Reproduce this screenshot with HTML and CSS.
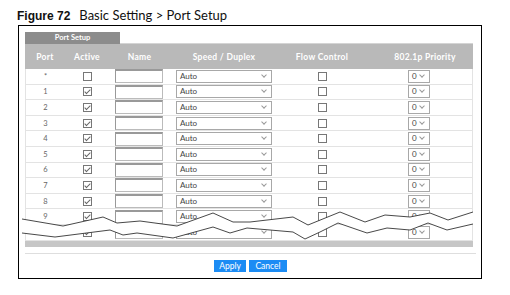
FILE: index.html
```html
<!DOCTYPE html>
<html>

<head>
    <title>Port Setup</title>
    <link rel="stylesheet" href="styles.css">
</head>

<body>
    <div class="fig-title"><b>Figure 72</b>Basic Setting &gt; Port Setup</div>

    <div class="frame">
        <div class="tabbar">
            <div class="tab">Port Setup</div>
        </div>

        <div class="row head">
            <div>Port</div>
            <div>Active</div>
            <div>Name</div>
            <div>Speed / Duplex</div>
            <div>Flow Control</div>
            <div class="prio-head">802.1p Priority</div>
        </div>

        <div class="rows">
            <div class="row"><div class="port">*</div><div class="c"><span class="cb"></span></div><div class="name"><span class="txt"></span></div><div class="speed"><span class="sel">Auto</span></div><div class="c"><span class="cb"></span></div><div class="prio"><span class="sel small">0</span></div></div>
            <div class="row"><div class="port">1</div><div class="c"><span class="cb on"></span></div><div class="name"><span class="txt"></span></div><div class="speed"><span class="sel">Auto</span></div><div class="c"><span class="cb"></span></div><div class="prio"><span class="sel small">0</span></div></div>
            <div class="row"><div class="port">2</div><div class="c"><span class="cb on"></span></div><div class="name"><span class="txt"></span></div><div class="speed"><span class="sel">Auto</span></div><div class="c"><span class="cb"></span></div><div class="prio"><span class="sel small">0</span></div></div>
            <div class="row"><div class="port">3</div><div class="c"><span class="cb on"></span></div><div class="name"><span class="txt"></span></div><div class="speed"><span class="sel">Auto</span></div><div class="c"><span class="cb"></span></div><div class="prio"><span class="sel small">0</span></div></div>
            <div class="row"><div class="port">4</div><div class="c"><span class="cb on"></span></div><div class="name"><span class="txt"></span></div><div class="speed"><span class="sel">Auto</span></div><div class="c"><span class="cb"></span></div><div class="prio"><span class="sel small">0</span></div></div>
            <div class="row"><div class="port">5</div><div class="c"><span class="cb on"></span></div><div class="name"><span class="txt"></span></div><div class="speed"><span class="sel">Auto</span></div><div class="c"><span class="cb"></span></div><div class="prio"><span class="sel small">0</span></div></div>
            <div class="row"><div class="port">6</div><div class="c"><span class="cb on"></span></div><div class="name"><span class="txt"></span></div><div class="speed"><span class="sel">Auto</span></div><div class="c"><span class="cb"></span></div><div class="prio"><span class="sel small">0</span></div></div>
            <div class="row"><div class="port">7</div><div class="c"><span class="cb on"></span></div><div class="name"><span class="txt"></span></div><div class="speed"><span class="sel">Auto</span></div><div class="c"><span class="cb"></span></div><div class="prio"><span class="sel small">0</span></div></div>
            <div class="row"><div class="port">8</div><div class="c"><span class="cb on"></span></div><div class="name"><span class="txt"></span></div><div class="speed"><span class="sel">Auto</span></div><div class="c"><span class="cb"></span></div><div class="prio"><span class="sel small">0</span></div></div>
            <div class="row"><div class="port">9</div><div class="c"><span class="cb on"></span></div><div class="name"><span class="txt"></span></div><div class="speed"><span class="sel">Auto</span></div><div class="c"><span class="cb"></span></div><div class="prio"><span class="sel small">0</span></div></div>
            <div class="row"><div class="port">28</div><div class="c"><span class="cb on"></span></div><div class="name"><span class="txt"></span></div><div class="speed"><span class="sel">Auto</span></div><div class="c"><span class="cb"></span></div><div class="prio"><span class="sel small">0</span></div></div>
        </div>

        <div class="bar"></div>
        <div class="rule"></div>

        <div class="buttons">
            <button class="btn apply">Apply</button>
            <button class="btn cancel">Cancel</button>
        </div>

        <!-- break mark across the cut-off rows -->
        <svg class="tear" width="464" height="254" viewBox="0 0 464 254">
            <polygon fill="#fff" points="4,194 45,201 85,192 99,198 122,196 159,201 195,188 215,197 232,197 275,192 290,200 322,187 347,197 367,190 392,192 412,188 430,195 455,187 455,199 429,205 410,198 392,205 369,203 349,208 320,198 302,207 287,214 275,207 229,203 212,208 195,202 155,213 119,208 105,210 92,205 37,212 4,208" />
            <polyline fill="none" stroke="#333" stroke-width="0.9" points="4,194 45,201 85,192 99,198 122,196 159,201 195,188 215,197 232,197 275,192 290,200 322,187 347,197 367,190 392,192 412,188 430,195 455,187" />
            <polyline fill="none" stroke="#333" stroke-width="0.9" points="4,208 37,212 92,205 105,210 119,208 155,213 195,202 212,208 229,203 275,207 287,214 302,207 320,198 349,208 369,203 392,205 410,198 429,205 455,199" />
        </svg>
    </div>
</body>

</html>
```

FILE: styles.css
```css
body {
    margin: 0;
    background-color: #fff;
    font-family: Lato, "Open Sans", sans-serif;
    color: #333;
}

.fig-title {
    height: 17px;
    padding: 8px 0 0 17px;
    font-size: 13px;
    line-height: 14px;
    color: #111;
}

.fig-title b {
    font-family: "Liberation Sans", Arial, sans-serif;
    font-size: 12px;
    margin-right: 9px;
}

.frame {
    position: relative;
    box-sizing: border-box;
    width: 464px;
    height: 254px;
    margin-left: 18px;
    padding: 6px 8px 0 6px;
    border: 1px solid #000;
}

.tabbar {
    display: flex;
}

.tabbar::after {
    content: "";
    flex: 1;
    border-bottom: 1px solid #d4d4d4;
}

.tab {
    width: 95px;
    height: 12px;
    background-color: #8c8c8c;
    color: #fff;
    font-size: 7.5px;
    font-weight: bold;
    line-height: 12px;
    text-align: center;
}

.row {
    display: grid;
    grid-template-columns: 39px 44px 61px 108px 88px 106px;
    align-items: center;
    box-sizing: border-box;
    height: 15.6px;
    border-bottom: 1px solid #e3e3e3;
}

.row.head {
    grid-template-columns: 40px 44px 61px 108px 88px 107px;
    height: 25px;
    border-bottom: none;
    background-color: #b9b9b9;
    color: #fff;
    font-size: 8.5px;
    font-weight: bold;
    letter-spacing: 0.3px;
    text-align: center;
}

.prio-head {
    padding-left: 11px;
}

.rows {
    border-left: 1px solid #e3e3e3;
    border-right: 1px solid #e3e3e3;
}

.port {
    text-align: center;
    font-size: 7.5px;
    color: #666;
}

.c {
    display: flex;
    justify-content: center;
}

.cb {
    position: relative;
    box-sizing: border-box;
    width: 9px;
    height: 9px;
    border: 1px solid #777;
    background-color: #fff;
}

.cb.on::after {
    content: "";
    position: absolute;
    left: 2px;
    top: 0;
    width: 2px;
    height: 5px;
    border-right: 1px solid #666;
    border-bottom: 1px solid #666;
    transform: rotate(45deg);
}

.name {
    display: flex;
    padding-left: 6px;
}

.txt {
    box-sizing: border-box;
    width: 48px;
    height: 14px;
    border: 1px solid #bbb;
    border-top: 2px solid #999;
    border-left-color: #999;
}

.speed {
    display: flex;
    padding-left: 6px;
}

.prio {
    display: flex;
    padding-left: 42px;
}

.sel {
    position: relative;
    box-sizing: border-box;
    width: 96px;
    height: 13px;
    padding-left: 3px;
    border: 1px solid #a8a8a8;
    background-color: #fff;
    font-size: 8px;
    line-height: 11px;
    color: #444;
}

.sel::after {
    content: "";
    position: absolute;
    right: 5px;
    top: 2px;
    width: 3px;
    height: 3px;
    border-right: 1px solid #999;
    border-bottom: 1px solid #999;
    transform: rotate(45deg);
}

.sel.small {
    width: 22px;
}

.bar {
    height: 6.5px;
    background-color: #c6c6c6;
}

.rule {
    width: 451px;
    margin-top: 6px;
    border-top: 1px solid #dedede;
}

.buttons {
    display: flex;
    justify-content: center;
    gap: 3px;
    margin-top: 6px;
    padding-left: 3px;
}

.btn {
    height: 12px;
    padding: 0;
    border: none;
    background-color: #1c8cf4;
    color: #fff;
    font-family: Lato, "Open Sans", sans-serif;
    font-size: 8.5px;
    line-height: 12px;
}

.apply {
    width: 32px;
}

.cancel {
    width: 38px;
}

.tear {
    position: absolute;
    left: -1px;
    top: -1px;
}
```
